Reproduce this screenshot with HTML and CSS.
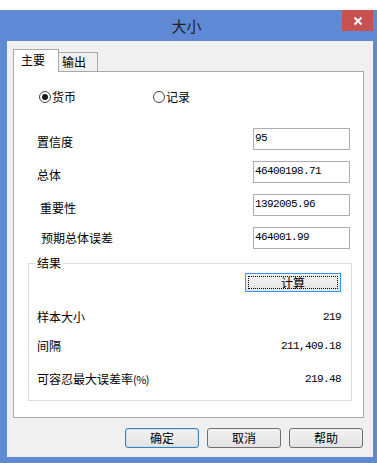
FILE: index.html
```html
<!DOCTYPE html>
<html>
    <head>
        <link rel="stylesheet" href="styles.css">
    </head>
    <body>
        <div class="window">
            <div class="titlebar">
                <span class="title">大小</span>
                <span class="close">
                    <svg width="10" height="10" viewBox="0 0 10 10">
                        <path d="M1.5 1.5 L8.5 8.5 M8.5 1.5 L1.5 8.5" stroke="#fff" stroke-width="2" fill="none"/>
                    </svg>
                </span>
            </div>
            <div class="client">
                <div class="tabs">
                    <div class="tab active">主要</div>
                    <div class="tab">输出</div>
                </div>
                <div class="panel">
                    <div class="radios">
                        <div class="radio-item first"><span class="radio checked"></span>货币</div>
                        <div class="radio-item"><span class="radio"></span>记录</div>
                    </div>
                    <div class="fields">
                        <div class="field"><span class="label">置信度</span><div class="input">95</div></div>
                        <div class="field"><span class="label">总体</span><div class="input">46400198.71</div></div>
                        <div class="field"><span class="label indent1">重要性</span><div class="input">1392005.96</div></div>
                        <div class="field"><span class="label indent2">预期总体误差</span><div class="input">464001.99</div></div>
                    </div>
                    <fieldset class="group">
                        <legend>结果</legend>
                        <div class="calc-row">
                            <div class="calc"><span class="focus">计算</span></div>
                        </div>
                        <div class="result r1"><span>样本大小</span><span class="num">219</span></div>
                        <div class="result r2"><span>间隔</span><span class="num">211,409.18</span></div>
                        <div class="result r3"><span>可容忍最大误差率<span class="pct">(%)</span></span><span class="num">219.48</span></div>
                    </fieldset>
                </div>
                <div class="buttons">
                    <div class="btn default">确定</div>
                    <div class="btn">取消</div>
                    <div class="btn">帮助</div>
                </div>
            </div>
        </div>
    </body>
</html>
```

FILE: styles.css
```css
body, html {
    margin: 0;
    padding: 0;
    background-color: white;
    font-family: 'Noto Sans CJK SC', sans-serif;
    font-size: 12px;
    color: #000;
    overflow: hidden;
}

.window {
    margin-top: 10px;
    background-color: #5f89d5;
    padding: 0 4px 6px 7px;
    width: 366px;
}

.titlebar {
    height: 31px;
    display: grid;
    grid-template-columns: 1fr auto 1fr;
    margin-left: -7px;
    margin-right: -4px;
    padding-right: 4px;
}

.title {
    grid-column: 2;
    font-size: 15px;
    line-height: 31px;
    color: #222;
}

.close {
    grid-column: 3;
    justify-self: end;
    width: 31px;
    height: 21px;
    background-color: #c75050;
    display: flex;
    align-items: center;
    justify-content: center;
}

.client {
    background-color: #f0f0f0;
    padding: 8px 9px 9px 6px;
}

/* tabs */
.tabs {
    display: flex;
    align-items: flex-end;
    height: 22px;
}

.tab {
    box-sizing: border-box;
    border: 1px solid #a9a9a9;
    border-bottom: none;
    line-height: 14px;
}

.tab.active {
    width: 46px;
    height: 23px;
    margin-bottom: -1px;
    padding: 3px 0 0 7px;
    background-color: white;
    position: relative;
    z-index: 1;
}

.tab:not(.active) {
    width: 39px;
    height: 19px;
    border-left: none;
    padding: 2px 0 0 3px;
    background-color: #f0f0f0;
}

.panel {
    background-color: white;
    border: 1px solid #a9a9a9;
    padding: 0 13px 16px 14px;
}

/* radios */
.radios {
    display: flex;
    margin-top: 19px;
    margin-left: 11px;
    height: 12px;
    line-height: 12px;
}

.radio-item {
    display: flex;
    align-items: center;
    gap: 1px;
}

.radio-item.first {
    width: 114px;
}

.radio {
    box-sizing: border-box;
    width: 12px;
    height: 12px;
    border: 1px solid #444;
    border-radius: 50%;
    background-color: white;
    display: flex;
    align-items: center;
    justify-content: center;
}

.radio.checked::after {
    content: '';
    width: 6px;
    height: 6px;
    border-radius: 50%;
    background-color: #1a1a1a;
}

/* input fields */
.fields {
    margin-top: 25px;
    display: flex;
    flex-direction: column;
    gap: 11px;
}

.field {
    display: flex;
    justify-content: space-between;
    align-items: center;
    height: 22px;
}

.label {
    margin-left: 9px;
    padding-top: 5px;
    line-height: 14px;
}

.label.indent1 {
    margin-left: 12px;
}

.label.indent2 {
    margin-left: 13px;
    padding-top: 0;
}

.input {
    box-sizing: border-box;
    width: 97px;
    height: 22px;
    border: 1px solid #abadb3;
    padding: 2px 1px;
    font-family: 'Liberation Mono', monospace;
    font-size: 11px;
    letter-spacing: -0.6px;
    line-height: 14px;
}

/* result group */
.group {
    margin: 7px -2px 0 0;
    border: 1px solid #dcdcdc;
    padding: 0 10px 14px 8px;
}

.group legend {
    margin-left: -2px;
    padding: 0 2px;
    line-height: 14px;
}

.calc-row {
    display: flex;
    justify-content: flex-end;
    margin-top: 3px;
}

.calc {
    box-sizing: border-box;
    width: 96px;
    height: 19px;
    border: 1px solid #3399ff;
    background: linear-gradient(#f4f4f4, #e3e3e3);
    padding: 2px;
    display: flex;
}

.calc .focus {
    flex: 1;
    border: 1px dotted #000;
    text-align: center;
    line-height: 11px;
}

.result {
    display: flex;
    justify-content: space-between;
    line-height: 14px;
}

.result.r1 { margin-top: 18px; }
.result.r2 { margin-top: 15px; }
.result.r3 { margin-top: 19px; }

.pct {
    font-size: 11px;
    letter-spacing: -0.5px;
}

.num {
    font-family: 'Liberation Mono', monospace;
    font-size: 11px;
    letter-spacing: -0.6px;
}

/* bottom buttons */
.buttons {
    display: flex;
    justify-content: flex-end;
    gap: 8px;
    margin-top: 10px;
    margin-right: 1px;
}

.btn {
    box-sizing: border-box;
    width: 74px;
    height: 20px;
    border: 1px solid #707070;
    border-radius: 3px;
    background: linear-gradient(#f2f2f2, #e2e2e2);
    text-align: center;
    line-height: 18px;
}

.btn.default {
    border-color: #3c7fb1;
    box-shadow: inset 0 0 0 1px #c7e3f8;
}
```
